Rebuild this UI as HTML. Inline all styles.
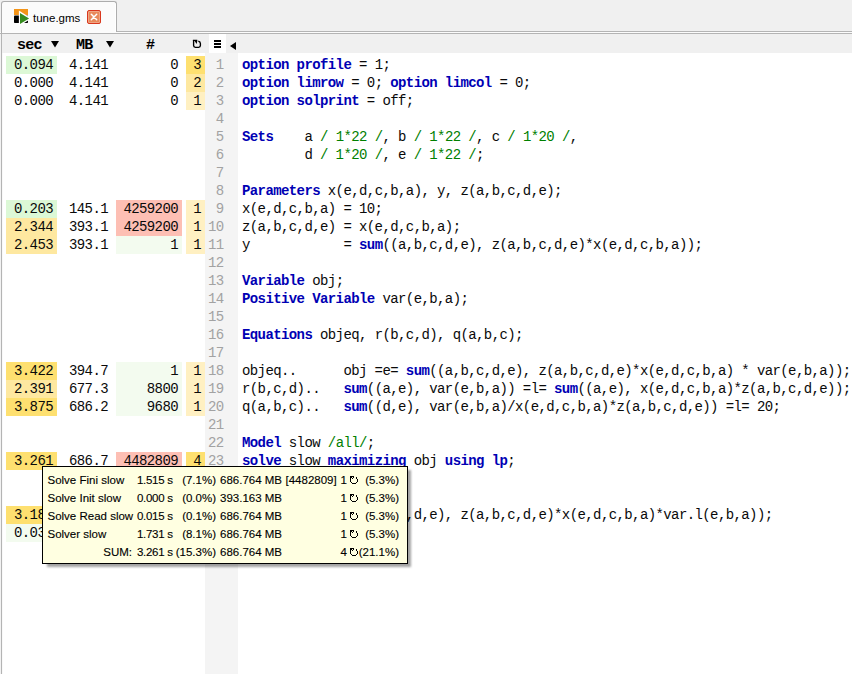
<!DOCTYPE html>
<html><head><meta charset="utf-8"><style>
*{margin:0;padding:0;box-sizing:border-box}
html,body{width:852px;height:674px;overflow:hidden;background:#fff}
body{position:relative;font-family:"Liberation Mono",monospace;font-size:14px;letter-spacing:-0.6px;color:#0a0a0a}
.a{position:absolute}
.c{position:absolute;height:18px;line-height:18px;text-align:right;padding-right:4px;white-space:pre}
.ln{position:absolute;left:205px;width:18.5px;text-align:right;height:18px;line-height:18px;color:#a2a2a2}
.cl{position:absolute;left:242px;height:18px;line-height:18px;white-space:pre}
.cl b{color:#0000b4;font-weight:bold}
.cl i{color:#008000;font-style:normal}
.tt{position:absolute;height:18px;line-height:18px;white-space:pre;font-family:"Liberation Sans",sans-serif;font-size:11.5px;letter-spacing:0;color:#000;-webkit-text-stroke:0.12px #000}
.hd{position:absolute;top:36px;height:19px;line-height:19px;font-weight:bold;color:#000;font-size:15px;letter-spacing:-0.8px}
</style></head><body>
<div class="a" style="left:0;top:0;width:852px;height:33px;background:#f0f0f0"></div>
<div class="a" style="left:116px;top:31px;width:736px;height:1px;background:#b4b4b4"></div>
<div class="a" style="left:0;top:32px;width:852px;height:1px;background:#fcfcfc"></div>
<div class="a" style="left:1px;top:1px;width:116px;height:31px;background:#fbfbfb;border:1px solid #adadad;border-bottom:none;border-radius:3px 3px 0 0;box-shadow:inset -1px 0 0 #fff"></div><div class="a" style="left:1px;top:32px;width:1px;height:1px;background:#adadad"></div>
<div class="a" style="left:0;top:33px;width:852px;height:1px;background:#b4b4b4"></div>
<div class="a" style="left:0;top:34px;width:852px;height:19px;background:#f0f0f0"></div>
<div class="a" style="left:0;top:34px;width:1px;height:640px;background:#f2f2f2"></div><div class="a" style="left:1px;top:33px;width:1px;height:641px;background:#b4b4b4"></div><div class="a" style="left:2px;top:53px;width:1px;height:621px;background:#f9f9f9"></div>
<div class="a" style="left:205px;top:53px;width:33px;height:621px;background:#f4f4f4"></div>
<div class="a" style="left:209px;top:34px;width:17px;height:19px;background:#fff"></div>
<!-- icon -->
<svg class="a" style="left:12px;top:7px" width="20" height="19"><rect x="2" y="2" width="14" height="6" fill="#f39418"/><rect x="2" y="8.6" width="14" height="7.4" rx="0.8" fill="#000"/><path d="M6.9 3.6 L19.4 11.4 L6.9 19.2 Z" fill="#fff"/><path d="M8 6 L17.1 11.4 L8 16.9 Z" fill="#358b1f"/></svg>
<div class="a" style="left:33px;top:9px;font-family:'Liberation Sans',sans-serif;font-size:11.5px;letter-spacing:0;line-height:18px;color:#000">tune.gms</div>
<div class="a" style="left:87px;top:10px;width:14px;height:14px;background:#e8895a;border:1px solid #d9381e;box-shadow:inset 0 0 0 1px #f0a585;border-radius:2px"></div>
<svg class="a" style="left:87px;top:10px" width="14" height="14"><path d="M4.3 4.3 L9.7 9.7 M9.7 4.3 L4.3 9.7" stroke="#fff" stroke-width="1.5" stroke-linecap="round"/></svg>
<div class="hd" style="left:17px">sec</div>
<div class="hd" style="left:76px">MB</div>
<div class="hd" style="left:146px">#</div>
<svg class="a" style="left:51px;top:41px" width="8" height="7"><path d="M0 0 H8 L4 6.5Z" fill="#000"/></svg>
<svg class="a" style="left:106px;top:41px" width="8" height="7"><path d="M0 0 H8 L4 6.5Z" fill="#000"/></svg>
<svg class="a" style="left:189px;top:37px" width="16" height="13"><path d="M4.6 3.2 V8.6 Q4.6 10.4 6.4 10.4 H9.6 Q11.4 10.4 11.4 8.6 V6.6 Q11.4 4.6 9.3 4.1" fill="none" stroke="#000" stroke-width="1.35"/><path d="M3.9 2.8 H8.3 V3.9 L7.7 6.9 L5.6 3.9 H3.9 Z" fill="#000"/></svg>
<svg class="a" style="left:214px;top:40px" width="7" height="8"><rect x="0" y="0" width="7" height="2" fill="#000"/><rect x="0" y="3" width="7" height="2" fill="#000"/><rect x="0" y="6" width="7" height="2" fill="#000"/></svg>
<svg class="a" style="left:230px;top:42px" width="6" height="8"><path d="M6 0 V8 L0 4Z" fill="#000"/></svg>
<div class="c" style="left:6px;top:56px;width:51px;background:#dcf8d6;">0.094</div><div class="c" style="left:61px;top:56px;width:51px;">4.141</div><div class="c" style="left:116px;top:56px;width:66px;">0</div><div class="c" style="left:186px;top:56px;width:19px;background:#fee070;">3</div><div class="c" style="left:6px;top:74px;width:51px;">0.000</div><div class="c" style="left:61px;top:74px;width:51px;">4.141</div><div class="c" style="left:116px;top:74px;width:66px;">0</div><div class="c" style="left:186px;top:74px;width:19px;background:#fee8a0;">2</div><div class="c" style="left:6px;top:92px;width:51px;">0.000</div><div class="c" style="left:61px;top:92px;width:51px;">4.141</div><div class="c" style="left:116px;top:92px;width:66px;">0</div><div class="c" style="left:186px;top:92px;width:19px;background:#fff0c2;">1</div><div class="c" style="left:6px;top:200px;width:51px;background:#dcf8d6;">0.203</div><div class="c" style="left:61px;top:200px;width:51px;">145.1</div><div class="c" style="left:116px;top:200px;width:66px;background:#fdbfb4;">4259200</div><div class="c" style="left:186px;top:200px;width:19px;background:#fff0c2;">1</div><div class="c" style="left:6px;top:218px;width:51px;background:#fee8a0;">2.344</div><div class="c" style="left:61px;top:218px;width:51px;">393.1</div><div class="c" style="left:116px;top:218px;width:66px;background:#fdbfb4;">4259200</div><div class="c" style="left:186px;top:218px;width:19px;background:#fff0c2;">1</div><div class="c" style="left:6px;top:236px;width:51px;background:#fee8a0;">2.453</div><div class="c" style="left:61px;top:236px;width:51px;">393.1</div><div class="c" style="left:116px;top:236px;width:66px;background:#f3fbef;">1</div><div class="c" style="left:186px;top:236px;width:19px;background:#fff0c2;">1</div><div class="c" style="left:6px;top:362px;width:51px;background:#fee070;">3.422</div><div class="c" style="left:61px;top:362px;width:51px;">394.7</div><div class="c" style="left:116px;top:362px;width:66px;background:#f3fbef;">1</div><div class="c" style="left:186px;top:362px;width:19px;background:#fff0c2;">1</div><div class="c" style="left:6px;top:380px;width:51px;background:#fee8a0;">2.391</div><div class="c" style="left:61px;top:380px;width:51px;">677.3</div><div class="c" style="left:116px;top:380px;width:66px;background:#f3fbef;">8800</div><div class="c" style="left:186px;top:380px;width:19px;background:#fff0c2;">1</div><div class="c" style="left:6px;top:398px;width:51px;background:#fee070;">3.875</div><div class="c" style="left:61px;top:398px;width:51px;">686.2</div><div class="c" style="left:116px;top:398px;width:66px;background:#f3fbef;">9680</div><div class="c" style="left:186px;top:398px;width:19px;background:#fff0c2;">1</div><div class="c" style="left:6px;top:452px;width:51px;background:#fee070;">3.261</div><div class="c" style="left:61px;top:452px;width:51px;">686.7</div><div class="c" style="left:116px;top:452px;width:66px;background:#fdbfb4;">4482809</div><div class="c" style="left:186px;top:452px;width:19px;background:#fee070;">4</div><div class="c" style="left:6px;top:506px;width:51px;background:#fee070;">3.188</div><div class="c" style="left:61px;top:506px;width:51px;">686.7</div><div class="c" style="left:116px;top:506px;width:66px;background:#f3fbef;">1</div><div class="c" style="left:186px;top:506px;width:19px;background:#fff0c2;">1</div><div class="c" style="left:6px;top:524px;width:51px;background:#f3fbef;">0.031</div><div class="c" style="left:61px;top:524px;width:51px;">4.141</div><div class="c" style="left:116px;top:524px;width:66px;">0</div><div class="c" style="left:186px;top:524px;width:19px;background:#fff0c2;">1</div>
<div class="ln" style="top:56px">1</div><div class="ln" style="top:74px">2</div><div class="ln" style="top:92px">3</div><div class="ln" style="top:110px">4</div><div class="ln" style="top:128px">5</div><div class="ln" style="top:146px">6</div><div class="ln" style="top:164px">7</div><div class="ln" style="top:182px">8</div><div class="ln" style="top:200px">9</div><div class="ln" style="top:218px">10</div><div class="ln" style="top:236px">11</div><div class="ln" style="top:254px">12</div><div class="ln" style="top:272px">13</div><div class="ln" style="top:290px">14</div><div class="ln" style="top:308px">15</div><div class="ln" style="top:326px">16</div><div class="ln" style="top:344px">17</div><div class="ln" style="top:362px">18</div><div class="ln" style="top:380px">19</div><div class="ln" style="top:398px">20</div><div class="ln" style="top:416px">21</div><div class="ln" style="top:434px">22</div><div class="ln" style="top:452px">23</div><div class="ln" style="top:470px">24</div><div class="ln" style="top:488px">25</div><div class="ln" style="top:506px">26</div><div class="ln" style="top:524px">27</div>
<div class="cl" style="top:56px"><b>option profile</b> = 1;</div><div class="cl" style="top:74px"><b>option limrow</b> = 0; <b>option limcol</b> = 0;</div><div class="cl" style="top:92px"><b>option solprint</b> = off;</div><div class="cl" style="top:110px"></div><div class="cl" style="top:128px"><b>Sets</b>    a <i>/ 1*22 /</i>, b <i>/ 1*22 /</i>, c <i>/ 1*20 /</i>,</div><div class="cl" style="top:146px">        d <i>/ 1*20 /</i>, e <i>/ 1*22 /</i>;</div><div class="cl" style="top:164px"></div><div class="cl" style="top:182px"><b>Parameters</b> x(e,d,c,b,a), y, z(a,b,c,d,e);</div><div class="cl" style="top:200px">x(e,d,c,b,a) = 10;</div><div class="cl" style="top:218px">z(a,b,c,d,e) = x(e,d,c,b,a);</div><div class="cl" style="top:236px">y            = <b>sum</b>((a,b,c,d,e), z(a,b,c,d,e)*x(e,d,c,b,a));</div><div class="cl" style="top:254px"></div><div class="cl" style="top:272px"><b>Variable</b> obj;</div><div class="cl" style="top:290px"><b>Positive Variable</b> var(e,b,a);</div><div class="cl" style="top:308px"></div><div class="cl" style="top:326px"><b>Equations</b> objeq, r(b,c,d), q(a,b,c);</div><div class="cl" style="top:344px"></div><div class="cl" style="top:362px">objeq..      obj =e= <b>sum</b>((a,b,c,d,e), z(a,b,c,d,e)*x(e,d,c,b,a) * var(e,b,a));</div><div class="cl" style="top:380px">r(b,c,d)..   <b>sum</b>((a,e), var(e,b,a)) =l= <b>sum</b>((a,e), x(e,d,c,b,a)*z(a,b,c,d,e));</div><div class="cl" style="top:398px">q(a,b,c)..   <b>sum</b>((d,e), var(e,b,a)/x(e,d,c,b,a)*z(a,b,c,d,e)) =l= 20;</div><div class="cl" style="top:416px"></div><div class="cl" style="top:434px"><b>Model</b> slow <i>/all/</i>;</div><div class="cl" style="top:452px"><b>solve</b> slow <b>maximizing</b> obj <b>using lp</b>;</div><div class="cl" style="top:470px"></div><div class="cl" style="top:488px"></div><div class="cl" style="top:506px">chk        <b>sum</b>((a,b,c,d,e), z(a,b,c,d,e)*x(e,d,c,b,a)*var.l(e,b,a));</div><div class="cl" style="top:524px"><b>display</b> chk;</div>
<div class="a" style="left:47px;top:470px;width:364px;height:97px;background:rgba(0,0,0,0.36);filter:blur(1.3px)"></div>
<div class="a" style="left:42px;top:466px;width:366px;height:98px;background:#ffffe1;border:1px solid #000;overflow:hidden">
<div class="a" style="left:0;top:8px;width:364px;height:90px"><div class="tt" style="top:-4px;left:4.5px;">Solve Fini slow</div><div class="tt" style="top:-4px;left:94px;letter-spacing:-0.3px">1.515 s</div><div class="tt" style="top:-4px;left:130px;width:43px;text-align:right">(7.1%)</div><div class="tt" style="top:-4px;left:177px">686.764 MB</div><div class="tt" style="top:-4px;left:242.5px">[4482809]</div><div class="tt" style="top:-4px;left:290px;width:14px;text-align:right">1</div><svg class="a" style="left:307px;top:1px" width="8" height="8" shape-rendering="crispEdges"><path d="M0 0h4v1h-4z M0 1h2v1h-2z M3 1h1v1h-1z M2 2h1v1h-1z M0 2h1v4h-1z M6 1h1v2h-1z M7 3h1v3h-1z M1 6h1v1h-1z M6 6h1v1h-1z M2 7h4v1h-4z" fill="#000"/></svg><div class="tt" style="top:-4px;left:310px;width:46px;text-align:right">(5.3%)</div><div class="tt" style="top:14px;left:4.5px;">Solve Init slow</div><div class="tt" style="top:14px;left:94px;letter-spacing:-0.3px">0.000 s</div><div class="tt" style="top:14px;left:130px;width:43px;text-align:right">(0.0%)</div><div class="tt" style="top:14px;left:177px">393.163 MB</div><div class="tt" style="top:14px;left:290px;width:14px;text-align:right">1</div><svg class="a" style="left:307px;top:19px" width="8" height="8" shape-rendering="crispEdges"><path d="M0 0h4v1h-4z M0 1h2v1h-2z M3 1h1v1h-1z M2 2h1v1h-1z M0 2h1v4h-1z M6 1h1v2h-1z M7 3h1v3h-1z M1 6h1v1h-1z M6 6h1v1h-1z M2 7h4v1h-4z" fill="#000"/></svg><div class="tt" style="top:14px;left:310px;width:46px;text-align:right">(5.3%)</div><div class="tt" style="top:32px;left:4.5px;">Solve Read slow</div><div class="tt" style="top:32px;left:94px;letter-spacing:-0.3px">0.015 s</div><div class="tt" style="top:32px;left:130px;width:43px;text-align:right">(0.1%)</div><div class="tt" style="top:32px;left:177px">686.764 MB</div><div class="tt" style="top:32px;left:290px;width:14px;text-align:right">1</div><svg class="a" style="left:307px;top:37px" width="8" height="8" shape-rendering="crispEdges"><path d="M0 0h4v1h-4z M0 1h2v1h-2z M3 1h1v1h-1z M2 2h1v1h-1z M0 2h1v4h-1z M6 1h1v2h-1z M7 3h1v3h-1z M1 6h1v1h-1z M6 6h1v1h-1z M2 7h4v1h-4z" fill="#000"/></svg><div class="tt" style="top:32px;left:310px;width:46px;text-align:right">(5.3%)</div><div class="tt" style="top:50px;left:4.5px;">Solver slow</div><div class="tt" style="top:50px;left:94px;letter-spacing:-0.3px">1.731 s</div><div class="tt" style="top:50px;left:130px;width:43px;text-align:right">(8.1%)</div><div class="tt" style="top:50px;left:177px">686.764 MB</div><div class="tt" style="top:50px;left:290px;width:14px;text-align:right">1</div><svg class="a" style="left:307px;top:55px" width="8" height="8" shape-rendering="crispEdges"><path d="M0 0h4v1h-4z M0 1h2v1h-2z M3 1h1v1h-1z M2 2h1v1h-1z M0 2h1v4h-1z M6 1h1v2h-1z M7 3h1v3h-1z M1 6h1v1h-1z M6 6h1v1h-1z M2 7h4v1h-4z" fill="#000"/></svg><div class="tt" style="top:50px;left:310px;width:46px;text-align:right">(5.3%)</div><div class="tt" style="top:68px;left:0;width:89px;text-align:right;">SUM:</div><div class="tt" style="top:68px;left:94px;letter-spacing:-0.3px">3.261 s</div><div class="tt" style="top:68px;left:130px;width:43px;text-align:right">(15.3%)</div><div class="tt" style="top:68px;left:177px">686.764 MB</div><div class="tt" style="top:68px;left:290px;width:14px;text-align:right">4</div><svg class="a" style="left:307px;top:73px" width="8" height="8" shape-rendering="crispEdges"><path d="M0 0h4v1h-4z M0 1h2v1h-2z M3 1h1v1h-1z M2 2h1v1h-1z M0 2h1v4h-1z M6 1h1v2h-1z M7 3h1v3h-1z M1 6h1v1h-1z M6 6h1v1h-1z M2 7h4v1h-4z" fill="#000"/></svg><div class="tt" style="top:68px;left:310px;width:46px;text-align:right">(21.1%)</div></div>
</div>
</body></html>
